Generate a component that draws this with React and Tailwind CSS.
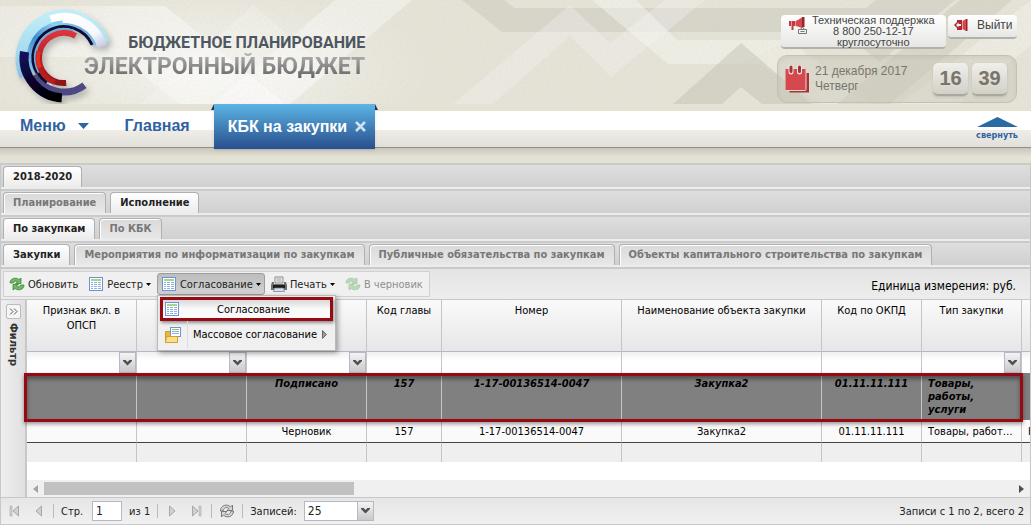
import React, { useState } from "react";
import clsx from "clsx";

const tabRows = [
  { active: "2018-2020", tabs: ["2018-2020"] },
  { active: "Исполнение", tabs: ["Планирование", "Исполнение"] },
  { active: "По закупкам", tabs: ["По закупкам", "По КБК"] },
  {
    active: "Закупки",
    tabs: [
      "Закупки",
      "Мероприятия по информатизации по закупкам",
      "Публичные обязательства по закупкам",
      "Объекты капитального строительства по закупкам",
    ],
  },
];

const columns = [
  { title: "Признак вкл. в ОПСП", width: "w-[110px]", filter: "select" },
  { title: "", label: "Признак", width: "w-[110px]", filter: "select" },
  { title: "", label: "Статус", width: "w-[120px]", filter: "select" },
  { title: "Код главы", width: "w-[75px]", filter: "text" },
  { title: "Номер", width: "w-[180px]", filter: "text" },
  { title: "Наименование объекта закупки", width: "w-[200px]", filter: "text" },
  { title: "Код по ОКПД", width: "w-[100px]", filter: "text" },
  { title: "Тип закупки", width: "w-[100px]", filter: "select" },
  { title: "", label: "Способ", width: "w-[110px]", filter: "text" },
];

const signedRow = ["", "", "Подписано", "157", "1-17-00136514-0047", "Закупка2", "01.11.11.111", "Товары, работы, услуги", ""];
const draftRow = ["", "", "Черновик", "157", "1-17-00136514-0047", "Закупка2", "01.11.11.111", "Товары, работ…", "Н"];

// angles in degrees, clockwise from the right
const arc = (r, from, to) => {
  const point = (a) => {
    const rad = (a * Math.PI) / 180;
    return `${(64 + r * Math.cos(rad)).toFixed(1)} ${(58 + r * Math.sin(rad)).toFixed(1)}`;
  };
  return `M${point(from)}A${r} ${r} 0 ${to - from > 180 ? 1 : 0} 1 ${point(to)}`;
};

const Logo = () => (
  <svg className="w-[120px] h-[104px] shrink-0" viewBox="0 0 120 104" fill="none">
    <defs>
      <linearGradient id="sky" x1="0" y1="0" x2="0" y2="1">
        <stop offset="0" stopColor="#bfecf7" />
        <stop offset="0.6" stopColor="#a6dbee" />
        <stop offset="1" stopColor="#86c2e6" />
      </linearGradient>
      <linearGradient id="silver" x1="0" y1="0" x2="1" y2="1">
        <stop offset="0" stopColor="#ffffff" />
        <stop offset="0.7" stopColor="#f6f8fc" />
        <stop offset="1" stopColor="#c5cbe4" />
      </linearGradient>
      <linearGradient id="ocean" x1="0" y1="1" x2="1" y2="0">
        <stop offset="0" stopColor="#8cc4ea" />
        <stop offset="0.4" stopColor="#3f8fd0" />
        <stop offset="0.7" stopColor="#8fd0ee" />
        <stop offset="1" stopColor="#5f92cc" />
      </linearGradient>
      <linearGradient id="night" x1="0" y1="0" x2="0.6" y2="1">
        <stop offset="0" stopColor="#150a5e" />
        <stop offset="1" stopColor="#020206" />
      </linearGradient>
      <linearGradient id="blood" x1="0" y1="0" x2="0" y2="1">
        <stop offset="0" stopColor="#da343c" />
        <stop offset="1" stopColor="#8c1218" />
      </linearGradient>
      <filter id="logoShadow" x="-20%" y="-20%" width="150%" height="150%">
        <feDropShadow dx="3" dy="4" stdDeviation="3" floodColor="#777" floodOpacity="0.5" />
      </filter>
    </defs>
    <g filter="url(#logoShadow)">
      <path d={arc(42, 155, 339)} stroke="url(#sky)" strokeWidth="13" />
      <path d={arc(34, 155, 337)} stroke="url(#ocean)" strokeWidth="7" />
      <path d={arc(40, 251, 343)} stroke="url(#silver)" strokeWidth="10" />
      <path d={arc(36, 251, 268)} stroke="#7fd0ec" strokeWidth="3" />
      <path d={arc(31, 150, 335)} stroke="#0b0b38" strokeWidth="3" />
      <path d={arc(31, 115, 150)} stroke="#f0f4fa" strokeWidth="3" />
      <path d={arc(29, 120, 290)} stroke="#6fa8dc" strokeWidth="2" />
      <path d={arc(34, 53, 150)} stroke="#4d4a85" strokeWidth="7" />
      <path d={arc(40, 93, 189)} stroke="url(#night)" strokeWidth="9" />
      <path d={arc(30, 125, 150)} stroke="#0b0b20" strokeWidth="3" />
      <path d={arc(25, 85, 298)} stroke="url(#blood)" strokeWidth="6" />
      <path d={arc(26, 110, 195)} stroke="#b81a1c" strokeWidth="5" />
      <path d={arc(26, 158, 195)} stroke="#e2301f" strokeWidth="4" />
    </g>
  </svg>
);

const HeaderPattern = () => (
  <svg className="absolute inset-0 w-full h-full" viewBox="0 0 1031 104" preserveAspectRatio="xMinYMin slice" aria-hidden="true">
    <defs>
      <linearGradient id="fade" x1="0" x2="1">
        <stop offset="0" stopColor="#fff" stopOpacity="0.3" />
        <stop offset="1" stopColor="#fff" stopOpacity="0.5" />
      </linearGradient>
      <radialGradient id="glow">
        <stop offset="0" stopColor="#fff" stopOpacity="0.6" />
        <stop offset="1" stopColor="#fff" stopOpacity="0" />
      </radialGradient>
      <filter id="grain">
        <feTurbulence type="fractalNoise" baseFrequency="0.45" numOctaves="2" />
        <feColorMatrix values="0 0 0 0 0.5  0 0 0 0 0.48  0 0 0 0 0.4  0.35 0 0 0 -0.09" />
      </filter>
    </defs>
    <rect width="1031" height="104" fill="#e6e4d8" />
    <ellipse cx="200" cy="70" rx="230" ry="90" fill="url(#glow)" />
    <path d="M0 6H165L285 104H180L120 57H0Z" fill="url(#fade)" />
    <path d="M253 5L330 70L290 104H270L253 62L205 104H140Z" fill="#fff" opacity="0.2" />
    <path d="M335 0H412L290 104H213Z" fill="#fff" opacity="0.4" />
    <path d="M462 0H504L514 8H866L876 0H955L880 62L842 32H502Z" fill="#c9c8bb" opacity="0.5" />
    <path d="M570 5L610 43L665 0H705L611 77L570 36L493 104H453Z" fill="#f2f0ef" opacity="0.4" />
    <path d="M592 0H636L677 40H790L740 64H668Z" fill="#fbfaf7" opacity="0.45" />
    <path d="M790 40L870 104H900L1031 0V45L960 104H820L760 64H740Z" fill="#fbfaf7" opacity="0.35" />
    <path d="M741 43L673 104H722L741 87L762 104H812Z" fill="#bfbeb1" opacity="0.45" />
    <path d="M960 0H1012L890 104H837Z" fill="#c4c3b6" opacity="0.4" />
    <rect width="1031" height="104" filter="url(#grain)" opacity="0.5" />
  </svg>
);

const CalendarIcon = () => (
  <svg className="w-6 h-7" viewBox="0 0 24 28">
    <path d="M4 8h20v19.500H4.500V25z" fill="#a83238" />
    <rect x="0" y="3.500" width="21" height="22" rx="1" fill="#d4484e" stroke="#dedcd2" />
    <path d="M6 2v5M14.500 2v5" stroke="#e9e7df" strokeWidth="5" strokeLinecap="round" />
    <path d="M6 2v4.500M14.500 2v4.500" stroke="#a83238" strokeWidth="3" strokeLinecap="round" />
  </svg>
);

const SupportIcon = () => (
  <svg className="w-5 h-5 shrink-0" viewBox="0 0 20 20">
    <path d="M1 6h2v5H1zM3.500 6h4v5h-2v4H3.500z" fill="#c4383e" />
    <path d="M8 6l6-3.500V13L8 11z" fill="#d4484e" />
    <path d="M14 2h2.500v10H14z" fill="#9c2328" />
    <path d="M10.500 14.500h8v4h-8zM12.500 14.500l2-2.500 2 2.500M12.500 16.500h4" fill="#f2f2f0" stroke="#777" />
  </svg>
);

const ExitIcon = () => (
  <svg className="w-4 h-4 shrink-0" viewBox="0 0 16 16">
    <path d="M4 3h5v10H4v-2L1 8l3-3z" fill="#a8282d" />
    <path d="M3 8l2.500-2.500V7H8v2H5.500v1.500z" fill="#f4f4f2" />
    <path d="M9.500 4L13 2v12l-3.500-2z" fill="#d4484e" />
    <path d="M13 2h1.500v12H13z" fill="#9c2328" />
  </svg>
);

const RefreshIcon = ({ faded }) => (
  <svg className={clsx("w-4 h-4 shrink-0", faded && "opacity-40")} viewBox="0 0 16 16">
    <path d="M1 7c0-5 6-6 9-3.500L12 2v5.500H6.500l2-1.500C7 4.500 5 5 4.500 7z" fill="#6dbb5a" stroke="#2f7c3a" strokeWidth="0.700" />
    <path d="M15 9c0 5-6 6-9 3.500L4 14V8.500h5.500l-2 1.500c1.500 1.500 3.500 1 4-1z" fill="#6dbb5a" stroke="#2f7c3a" strokeWidth="0.700" />
  </svg>
);

const ListIcon = () => (
  <svg className="w-4 h-4 shrink-0" viewBox="0 0 16 16">
    <rect x="1.500" y="1.500" width="13" height="13" fill="#fff" stroke="#6c93d2" />
    <path d="M3 3h10v2H3z" fill="#a5d394" />
    <path d="M3 6.500h2m1 0h3m1 0h3M3 8.500h2m1 0h3m1 0h3M3 10.500h2m1 0h3m1 0h3M3 12.500h2m1 0h3m1 0h3" stroke="#8eaee0" />
  </svg>
);

const FolderIcon = () => (
  <svg className="w-4 h-4 shrink-0" viewBox="0 0 16 16">
    <path d="M0.500 4.500h4l1 2h6v9h-11z" fill="#e9b93c" stroke="#c99a2e" />
    <rect x="5.500" y="0.500" width="10" height="9" fill="#fff" stroke="#6c93d2" />
    <path d="M7 2.500h7" stroke="#8cc63f" />
    <path d="M7 4.500h7M7 6.500h7" stroke="#8eaee0" />
    <path d="M1.500 9.500h11v6H0.500z" fill="#fbe08a" stroke="#d3a02c" />
  </svg>
);

const PrinterIcon = () => (
  <svg className="w-4 h-4 shrink-0" viewBox="0 0 16 16">
    <path d="M4 1h8v6H4z" fill="#f4f4f4" stroke="#888" />
    <path d="M5.500 3h5M5.500 5h5" stroke="#999" />
    <path d="M1 6h2v2h10V6h2l1 3v5H0V9z" fill="#6d6f73" />
    <path d="M2 9h12v3H2z" fill="#1c1c1c" />
    <path d="M3.500 12h9l1 3.500h-11z" fill="#cfe0f2" stroke="#777" strokeWidth="0.700" />
  </svg>
);

const Caret = () => (
  <svg className="w-[5px] h-[3px]" viewBox="0 0 5 3">
    <path d="M0 0h5L2.500 3z" fill="#000" />
  </svg>
);

const Trigger = () => (
  <span className="pointer-events-none absolute inset-y-0 right-0 flex w-[17px] items-center justify-center border border-[#b5b8c8] bg-linear-to-b from-[#f4f4f4] to-[#c9c9c9]">
    <svg className="w-[9px] h-[6px]" viewBox="0 0 9 6">
      <path d="M0 0h2.500l2 2 2-2H9v1L4.500 5.500 0 1z" fill="#505050" />
    </svg>
  </span>
);

const Separator = () => <span className="h-[14px] w-px bg-[#bdbcab]" />;

const PageArrow = ({ label, last, flip }) => (
  <button aria-label={label} className="flex h-4 w-4 items-center justify-center">
    <svg className={clsx("w-3 h-3", flip && "-scale-x-100")} viewBox="0 0 12 12">
      <path d="M2.500 1v10L8 6z" fill="#d0d0d0" stroke="#a8a8a8" />
      {last && <path d="M9 1h2v10H9z" fill="#d0d0d0" stroke="#a8a8a8" strokeWidth="0.600" />}
    </svg>
  </button>
);

const ToolButton = ({ icon, label, menu, pressed, disabled, onClick }) => (
  <button
    onClick={onClick}
    disabled={disabled}
    className={clsx(
      "flex h-[22px] items-center gap-[3px] rounded-[3px] border px-[3px]",
      pressed ? "border-[#9d9d9d] bg-linear-to-b from-[#bdbdbd] to-[#d2d2d2]" : "border-transparent",
      disabled ? "text-[#8f8f8f]" : "text-[#222]"
    )}
  >
    {icon}
    <span>{label}</span>
    {menu && <Caret />}
  </button>
);

const Header = () => (
  <header className="relative flex h-[104px] justify-between overflow-hidden">
    <HeaderPattern />
    <div className="relative flex">
      <Logo />
      <div className="-ml-9 mt-[33px] text-right font-['Roboto'] font-bold">
        <div className="text-[16px] leading-5 text-[#4e5761]">БЮДЖЕТНОЕ ПЛАНИРОВАНИЕ</div>
        <div className="bg-linear-to-b from-[#b5b5b5] to-[#5c5c5c] bg-clip-text text-[23px] leading-7 text-transparent">
          ЭЛЕКТРОННЫЙ БЮДЖЕТ
        </div>
      </div>
    </div>
    <div className="relative mr-[14px] mt-[15px] w-[240px] text-[#444]">
      <div className="flex items-start justify-end gap-[2px]">
        <button className="flex h-[34px] w-[165px] items-start gap-1 rounded-[4px] border-b-2 border-[#b3b2aa] bg-linear-to-b from-white to-[#e6e6e4] pl-[7px] text-[11px] leading-[11px]">
          <SupportIcon />
          <span className="whitespace-nowrap">
            Техническая поддержка
            <br />8 800 250-12-17
            <br />
            круглосуточно
          </span>
        </button>
        <button className="flex h-6 w-[69px] items-center gap-2 rounded-[4px] border-b-2 border-[#b3b2aa] bg-linear-to-b from-white to-[#e6e6e4] pb-[2px] pl-[5px] text-[12px]">
          <ExitIcon />
          Выйти
        </button>
      </div>
      <div className="mt-[6px] flex h-12 items-center rounded-[10px] border border-[#c3c1b5] bg-[#c9c7ba]/50 pl-[7px] pr-[9px] shadow-inner">
        <CalendarIcon />
        <div className="ml-[6px] grow text-[12px] leading-[15px] text-[#77766d]">
          21 декабря 2017
          <br />
          Четверг
        </div>
        <div className="flex gap-1 text-[20px] font-bold text-[#77756c]">
          {["16", "39"].map((part) => (
            <span
              key={part}
              className="flex h-[33px] w-[35px] items-center justify-center rounded-[5px] border-b-2 border-[#aaa89d] bg-linear-to-b from-[#f0efea] to-[#d2d0c6] shadow"
            >
              {part}
            </span>
          ))}
        </div>
      </div>
    </div>
  </header>
);

const Nav = () => (
  <nav className="flex h-11 border-b border-[#8f8e8a] text-[16px] font-bold text-[#2f62a3]">
    <div className="mt-[7px] flex h-9 w-full items-center bg-[linear-gradient(#fff_19px,#f0ede6_19px,#e0dfda_36px)] pl-5">
      <button className="flex items-center gap-3 pb-[6px]">
        Меню
        <svg className="w-[11px] h-[6px]" viewBox="0 0 11 6">
          <path d="M0 0h11L5.500 6z" fill="#2c66a8" />
        </svg>
      </button>
      <a href="#" className="ml-9 pb-[6px]">
        Главная
      </a>
      <div className="relative -mt-[7px] ml-6 flex h-[45px] shrink-0 items-center gap-2 self-start bg-linear-to-b from-[#5cb6e5] to-[#2a4f8d] pl-[14px] pr-[9px] text-white shadow">
        <svg className="absolute -left-[3px] top-0 w-[3px] h-[6px]" viewBox="0 0 3 6">
          <path d="M3 0v6H0z" fill="#1d3460" />
        </svg>
        <svg className="absolute -right-[3px] top-0 w-[3px] h-[6px]" viewBox="0 0 3 6">
          <path d="M0 0v6h3z" fill="#1d3460" />
        </svg>
        <span>КБК на закупки</span>
        <button aria-label="Закрыть">
          <svg className="w-[11px] h-[11px]" viewBox="0 0 11 11">
            <path d="M1 1l9 9M10 1l-9 9" stroke="#cfe2f3" strokeWidth="2.500" />
          </svg>
        </button>
      </div>
      <button className="ml-auto mr-[13px] flex flex-col items-center gap-[2px] font-['DejaVu_Sans_Condensed'] text-[9px] leading-3">
        <svg className="w-[41px] h-[10px]" viewBox="0 0 41 10">
          <path d="M0 10L20.500 0 41 10z" fill="#2a6ba5" />
        </svg>
        свернуть
      </button>
    </div>
  </nav>
);

const TabRow = ({ tabs, initial }) => {
  const [active, setActive] = useState(initial);

  return (
    <div className="flex h-[26px] items-end gap-1 border-t-2 border-[#cacaca] bg-linear-to-b from-[#dedede] to-[#cfcfcf] pl-[2px] shadow-[inset_0_-2px_0_#ececec]">
      {tabs.map((tab) => (
        <button
          key={tab}
          onClick={() => setActive(tab)}
          className={clsx(
            "mb-[2px] h-[21px] whitespace-nowrap rounded-t-[4px] border border-b-0 border-[#b0b0b0] px-[9px] pb-[2px] font-bold",
            tab === active
              ? "bg-linear-to-b from-white to-[#ececec] text-[#222]"
              : "bg-linear-to-b from-[#dadada] to-[#e8e8e8] text-[#777] shadow-[inset_1px_1px_0_#fff]"
          )}
        >
          {tab}
        </button>
      ))}
    </div>
  );
};

const Toolbar = () => {
  const [open, setOpen] = useState(true);

  return (
    <div className="flex h-8 items-center justify-between border-t-2 border-[#cacaca] bg-linear-to-b from-[#e4e4e4] to-[#ededed] pl-[2px] pr-[14px]">
      <div className="flex h-[26px] items-center gap-[2px] border border-[#d0d0d0] bg-[#f0f0f0] pl-[1px] pr-[2px]">
        <ToolButton icon={<RefreshIcon />} label="Обновить" />
        <ToolButton icon={<ListIcon />} label="Реестр" menu />
        <div className="relative">
          <ToolButton icon={<ListIcon />} label="Согласование" menu pressed={open} onClick={() => setOpen(!open)} />
          {open && (
            <div className="absolute left-0 top-[22px] z-20 w-[179px] border border-[#b9b9b9] bg-[#f0f0f0] p-[2px] pt-px shadow-[2px_2px_5px_rgba(0,0,0,0.35)]">
              <button className="flex h-6 w-full items-center border-3 border-[#970a12] bg-linear-to-b from-[#d8d8d8] to-[#fafafa] to-50% pl-[1px] pr-10 shadow-[1px_2px_3px_rgba(0,0,0,0.4)]">
                <ListIcon />
                <span className="grow text-right">Согласование</span>
              </button>
              <button className="flex h-[27px] w-full items-center pl-[5px]">
                <FolderIcon />
                <span className="ml-[6px] flex h-full items-center border-l border-[#dcdcdc] pl-[5px]">Массовое согласование</span>
                <svg className="ml-auto mr-[6px] w-[5px] h-[9px]" viewBox="0 0 5 9">
                  <path d="M0.500 0.500v8l4-4z" fill="#999" stroke="#555" strokeWidth="0.800" />
                </svg>
              </button>
            </div>
          )}
        </div>
        <ToolButton icon={<PrinterIcon />} label="Печать" menu />
        <ToolButton icon={<RefreshIcon faded />} label="В черновик" disabled />
      </div>
      <span className="pt-1 text-[12px] text-black">Единица измерения: руб.</span>
    </div>
  );
};

const Grid = () => (
  <div className="flex border-t border-[#c8c8c8]">
    <aside className="flex w-[26px] shrink-0 flex-col items-center border-r-2 border-[#c8c8c8] bg-linear-to-r from-[#efefef] to-[#e0e0e0] pt-1">
      <button aria-label="Развернуть фильтр" className="flex h-[15px] w-[15px] items-center justify-center rounded-[2px] border border-[#bbb] bg-[#f6f6f6]">
        <svg className="w-[9px] h-[7px]" viewBox="0 0 9 7" fill="none" stroke="#555">
          <path d="M1 0.500l3 3-3 3M5 0.500l3 3-3 3" />
        </svg>
      </button>
      <span className="mt-1 font-bold text-[#333] [writing-mode:vertical-rl]">Фильтр</span>
    </aside>
    <div className="relative min-w-0 grow bg-white">
      <div className="overflow-hidden">
        <table className="w-[1105px] table-fixed border-separate border-spacing-0 text-center text-black">
          <colgroup>
            {columns.map((col, i) => (
              <col key={i} className={col.width} />
            ))}
          </colgroup>
          <thead>
            <tr className="h-[52px] bg-linear-to-b from-[#fafafa] to-[#e6e6e8]">
              {columns.map((col, i) => (
                <th key={i} className="border-r border-b border-r-[#c5c5c5] border-b-[#b5b8c8] px-1 pt-[3px] align-top leading-[15px] font-normal">
                  {col.title}
                </th>
              ))}
            </tr>
            <tr className="h-[21px]">
              {columns.map((col, i) => (
                <td key={i} className="border-r border-[#c5c5c5] p-0">
                  <div className="relative h-[21px] bg-linear-to-b from-[#eef0f1] to-white to-40%">
                    {col.filter === "select" ? (
                      <>
                        <select aria-label={col.title || col.label} className="h-full w-full appearance-none">
                          <option></option>
                        </select>
                        <Trigger />
                      </>
                    ) : (
                      <input type="text" aria-label={col.title || col.label} className="h-full w-full px-1" />
                    )}
                  </div>
                </td>
              ))}
            </tr>
          </thead>
          <tbody>
            <tr className="h-[47px] bg-[#808080] font-bold italic">
              {signedRow.map((cell, i) => (
                <td key={i} className={clsx("border-r border-[#c5c5c5] px-[6px] pt-[4px] align-top leading-[13px]", i === 7 && "pr-8 text-left")}>
                  {cell}
                </td>
              ))}
            </tr>
            <tr className="h-[23px] bg-[#fafafa]">
              {draftRow.map((cell, i) => (
                <td key={i} className={clsx("whitespace-nowrap border-r border-b border-r-[#c5c5c5] border-b-[#444] px-[6px]", i > 6 && "text-left")}>
                  {cell}
                </td>
              ))}
            </tr>
            <tr className="h-[19px] bg-[#efefef]">
              {columns.map((col, i) => (
                <td key={i} className="border-r border-[#c5c5c5]"></td>
              ))}
            </tr>
          </tbody>
        </table>
      </div>
      <div className="absolute -left-[3px] top-[73px] h-[49px] w-[999px] border-3 border-[#970a12] shadow-[0_2px_4px_rgba(0,0,0,0.4),inset_0_3px_4px_rgba(0,0,0,0.4)]"></div>
      <div className="mt-[18px] flex h-[17px] items-center gap-[6px] bg-[#f0f0f0] px-[6px]">
        <svg className="w-[5px] h-2" viewBox="0 0 5 8">
          <path d="M5 0v8L0 4z" fill="#a3a3a3" />
        </svg>
        <div className="h-[13px] grow">
          <div className="h-full w-[32%] bg-[#c1c1c1]"></div>
        </div>
        <svg className="w-[5px] h-2" viewBox="0 0 5 8">
          <path d="M0 0v8l5-4z" fill="#505050" />
        </svg>
      </div>
    </div>
  </div>
);

const Pager = () => (
  <div className="flex h-7 items-center gap-[7px] border-y border-[#c8c8c8] bg-linear-to-b from-[#e6e6e6] to-[#f0f0f0] px-[6px] text-[#222]">
    <PageArrow label="Первая страница" last flip />
    <PageArrow label="Предыдущая страница" flip />
    <Separator />
    <label htmlFor="page">Стр.</label>
    <input id="page" type="text" defaultValue="1" className="ml-[2px] h-5 w-[30px] border border-[#b5b8c8] bg-white px-[3px] text-[12px]" />
    <span>из 1</span>
    <Separator />
    <PageArrow label="Следующая страница" />
    <PageArrow label="Последняя страница" last />
    <Separator />
    <button aria-label="Обновить список">
      <svg className="w-4 h-4" viewBox="0 0 16 16">
        <path d="M1.500 8c0-6 7-7.500 10-4l2-2v5.500H8l2-2C8 3.500 4.500 4.500 4 8z" fill="#d8d8d8" stroke="#777" />
        <path d="M14.500 8c0 6-7 7.500-10 4l-2 2V8.500H8l-2 2c2 2 5.500 1 6-2.500z" fill="#d8d8d8" stroke="#777" />
      </svg>
    </button>
    <Separator />
    <label htmlFor="pageSize">Записей:</label>
    <div className="relative h-5 w-[70px]">
      <select id="pageSize" defaultValue="25" className="h-full w-full appearance-none border border-[#b5b8c8] bg-white px-[3px] text-[12px]">
        <option>25</option>
        <option>50</option>
      </select>
      <Trigger />
    </div>
    <span className="ml-auto">Записи с 1 по 2, всего 2</span>
  </div>
);

const App = () => (
  <div className="min-w-0 overflow-hidden bg-[#e4e2d5] font-['Liberation_Sans',sans-serif]">
    <Header />
    <Nav />
    <div className="h-[15px] bg-linear-to-b from-[#c9c7bd] to-[#e4e2d5] to-60%"></div>
    <main className="border-x border-[#c8c8c8] font-['DejaVu_Sans_Condensed','DejaVu_Sans',sans-serif] text-[11px] leading-[15px]">
      {tabRows.map((row) => (
        <TabRow key={row.active} tabs={row.tabs} initial={row.active} />
      ))}
      <Toolbar />
      <Grid />
      <Pager />
    </main>
  </div>
);

export default App;
